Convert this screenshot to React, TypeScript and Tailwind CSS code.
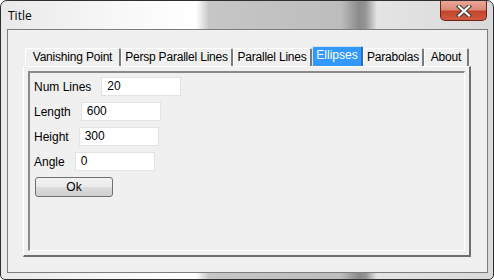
import React from 'react';

const tabs = [
    { name: 'Vanishing Point', w: 'w-[96px]' },
    { name: 'Persp Parallel Lines', w: 'w-[112px]' },
    { name: 'Parallel Lines', w: 'w-[79px]' },
    { name: 'Ellipses', w: 'w-[51px]' },
    { name: 'Parabolas', w: 'w-[61px]' },
    { name: 'About', w: 'w-[45px]' },
];

const fields = [
    { label: 'Num Lines', value: '20' },
    { label: 'Length', value: '600' },
    { label: 'Height', value: '300' },
    { label: 'Angle', value: '0' },
];

const CloseButton = () => (
    <div className="absolute top-0 right-[6px] w-[47px] h-[20px] rounded-b-[5px] border border-t-0 border-[#6b2417] bg-[linear-gradient(to_bottom,#e9a797_0%,#dd8a78_45%,#c4452c_55%,#d0593f_100%)] flex items-center justify-center">
        <svg width="16" height="12" viewBox="0 0 16 12">
            <path d="M3 1.5 L13 10.5 M13 1.5 L3 10.5" stroke="#3b3b3b" strokeWidth="4.2" strokeLinecap="square" />
            <path d="M3 1.5 L13 10.5 M13 1.5 L3 10.5" stroke="#ffffff" strokeWidth="2.2" strokeLinecap="square" />
        </svg>
    </div>
);

export default function App() {
    return (
        <div className="w-[494px] h-[280px] overflow-hidden" style={{ fontFamily: '"Liberation Sans", Arial, sans-serif' }}>
            <div className="relative w-[494px] h-[280px] rounded-t-[7px] rounded-b-[5px] border border-[#2f2f2f] bg-[linear-gradient(to_right,#e9e9e9_0px,#f8f8f8_120px,#ffffff_195px,#c6c6c6_208px,#bdbdbd_340px,#8a8a8a_358px,#969696_365px,#e4e4e4_376px,#d9d9d9_494px)] flex flex-col">
                <div className="h-[28px] flex items-center pl-[7px] pt-[1px] text-[12px] text-black" style={{ fontFamily: '"Segoe UI", "Open Sans", "Liberation Sans", sans-serif' }}>
                    Title
                </div>
                <CloseButton />
                <div className="ml-[6px] w-[481px] h-[244px] border border-[#7d7d7d] bg-[#f0f0f0] pl-[15px] pt-[16px]">
                    <div className="flex items-end h-[20px] pl-[2px]">
                        {tabs.map(tab =>
                            tab.name === 'Ellipses' ? (
                                <div key={tab.name} className={`${tab.w} shrink-0 whitespace-nowrap h-[20px] bg-[#3399ff] border-t border-l border-[#cfe4fb] border-r-2 border-r-[#2a6fbf] rounded-t-[2px] text-white text-[12px] leading-[16px] flex justify-center`}>
                                    {tab.name}
                                </div>
                            ) : (
                                <div key={tab.name} className={`${tab.w} shrink-0 whitespace-nowrap h-[18px] border-t border-l border-white border-r-2 border-r-[#7a7a7a] rounded-t-[2px] text-black text-[12px] leading-[17px] flex justify-center tracking-[-0.2px]`}>
                                    {tab.name}
                                </div>
                            )
                        )}
                    </div>
                    <div className="w-[448px] h-[191px] border-t border-l border-white border-r-2 border-b-2 border-r-[#6e6e6e] border-b-[#6e6e6e] p-[4px]">
                        <div className="w-full h-full border-t-2 border-l-2 border-t-[#8a8a8a] border-l-[#8a8a8a] border-r border-b border-r-white border-b-white pl-[4px] pt-[4px] flex flex-col gap-[6px] text-[12px] text-black">
                            {fields.map(f => (
                                <div key={f.label} className="flex items-center gap-[10px] h-[19px]">
                                    <span>{f.label}</span>
                                    <div className="w-[80px] h-[19px] bg-white border border-[#e3e3e3] pl-[5px] leading-[17px]">{f.value}</div>
                                </div>
                            ))}
                            <button className="w-[78px] h-[20px] ml-[1px] rounded-[3px] border border-[#707070] bg-[linear-gradient(to_bottom,#f2f2f2_0%,#ebebeb_50%,#dddddd_51%,#cfcfcf_100%)] text-[12px] leading-[17px] text-black">
                                Ok
                            </button>
                        </div>
                    </div>
                </div>
            </div>
        </div>
    );
}
